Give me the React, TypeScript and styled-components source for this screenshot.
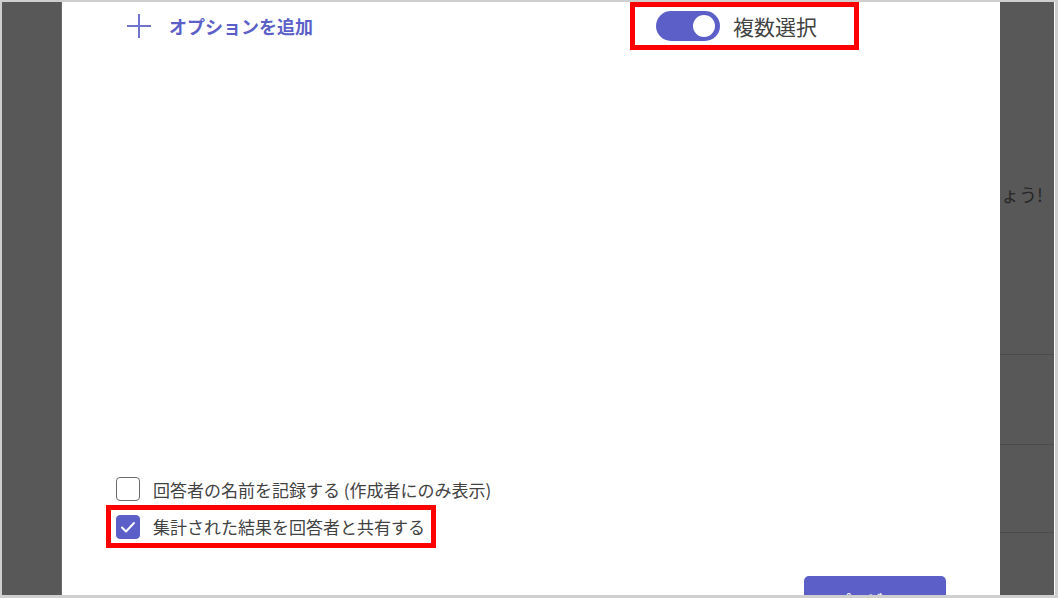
import React from "react";
import styled, { createGlobalStyle } from "styled-components";

const Global = createGlobalStyle`
  html, body { margin: 0; padding: 0; background: #ffffff; }
  body { font-family: "Noto Sans CJK JP", "Noto Sans", sans-serif; }
  * { box-sizing: border-box; }
`;

const Frame = styled.div`
  width: 1058px;
  height: 598px;
  border-style: solid;
  border-color: #cfcfcf;
  border-width: 2px 3px 3px 2px;
  display: flex;
  overflow: hidden;
  background: #ffffff;
`;

const Shade = styled.div<{ $w: number }>`
  width: ${(p) => p.$w}px;
  flex: none;
  background: #585858;
  display: flex;
  flex-direction: column;
  overflow: hidden;
`;

const BgRow = styled.div<{ $h: number; $line?: boolean }>`
  height: ${(p) => p.$h}px;
  flex: none;
  border-bottom: ${(p) => (p.$line ? "1px solid #4b4b4b" : "none")};
  display: flex;
  align-items: flex-end;
`;

const BgText = styled.span`
  font-size: 18px;
  color: #262626;
  white-space: nowrap;
  line-height: 24px;
  padding-left: 1px;
  margin-bottom: 1px;
`;

const Modal = styled.div`
  width: 939px;
  flex: none;
  background: #ffffff;
  display: flex;
  flex-direction: column;
  overflow: hidden;
  border-left: 1px solid #6a6a6a;
  & > * { flex: none; }
`;

const TopRow = styled.div`
  height: 48px;
  display: flex;
  align-items: center;
  justify-content: space-between;
  padding: 0 141px 0 64px;
`;

const AddOption = styled.button`
  display: flex;
  align-items: center;
  gap: 17px;
  border: none;
  background: none;
  padding: 0;
  font-family: inherit;
  font-size: 18px;
  font-weight: 600;
  color: #5b5fc7;
`;

const Highlight = styled.div<{ $pad: string }>`
  border: 5px solid #ff0000;
  padding: ${(p) => p.$pad};
  display: flex;
  align-items: center;
  flex: none;
`;

const ToggleBox = styled(Highlight)`
  align-self: stretch;
  width: 229px;
  gap: 13px;
`;

const Track = styled.span`
  width: 64px;
  height: 30px;
  border-radius: 15px;
  background: #5b5fc7;
  position: relative;
  flex: none;
`;

const Knob = styled.span`
  position: absolute;
  right: 5px;
  top: 4px;
  width: 22px;
  height: 22px;
  border-radius: 50%;
  background: #ffffff;
`;

const ToggleLabel = styled.span`
  font-size: 21px;
  color: #424242;
  line-height: 28px;
  white-space: nowrap;
`;

const Spacer = styled.div`
  height: 427px;
`;

const CheckRow = styled.label`
  display: flex;
  align-items: center;
  gap: 13px;
  height: 24px;
  font-size: 17px;
  color: #424242;
  white-space: nowrap;
  flex: none;
`;

const PlainRow = styled(CheckRow)`
  margin-left: 54px;
`;

const CheckWrap = styled(Highlight)`
  margin-left: 44px;
  margin-top: 4px;
  width: 330px;
  height: 43px;
`;

const Box = styled.span<{ $checked?: boolean }>`
  width: 24px;
  height: 24px;
  flex: none;
  border-radius: 4px;
  border: 1.5px solid ${(p) => (p.$checked ? "#5b5fc7" : "#6b6b6b")};
  background: ${(p) => (p.$checked ? "#5b5fc7" : "#ffffff")};
  display: flex;
  align-items: center;
  justify-content: center;
`;

const Footer = styled.div`
  margin-top: 28px;
  display: flex;
  justify-content: flex-end;
  padding-right: 54px;
`;

const Primary = styled.button`
  width: 142px;
  height: 40px;
  border: none;
  border-radius: 5px;
  background: #5b5fc7;
  color: #ffffff;
  font-family: inherit;
  font-size: 16px;
  font-weight: 700;
  padding-top: 9px;
`;

export default function App() {
  return (
    <>
      <Global />
      <Frame>
        <Shade $w={59} />
        <Modal>
          <TopRow>
            <AddOption>
              <svg width="26" height="26" viewBox="0 0 26 26">
                <path d="M13 1v24M1 13h24" stroke="#7174cf" strokeWidth="2" fill="none" />
              </svg>
              オプションを追加
            </AddOption>
            <ToggleBox $pad="0 0 0 21px">
              <Track>
                <Knob />
              </Track>
              <ToggleLabel>複数選択</ToggleLabel>
            </ToggleBox>
          </TopRow>
          <Spacer />
          <PlainRow>
            <Box />
            回答者の名前を記録する (作成者にのみ表示)
          </PlainRow>
          <CheckWrap $pad="0 0 0 5px">
            <CheckRow>
              <Box $checked>
                <svg width="18" height="18" viewBox="0 0 18 18">
                  <path d="M3 9.5l4 4 8-8.5" stroke="#ffffff" strokeWidth="2" fill="none" strokeLinecap="round" strokeLinejoin="round" />
                </svg>
              </Box>
              集計された結果を回答者と共有する
            </CheckRow>
          </CheckWrap>
          <Footer>
            <Primary>プレビュー</Primary>
          </Footer>
        </Modal>
        <Shade $w={54}>
          <BgRow $h={205}>
            <BgText>ょう!</BgText>
          </BgRow>
          <BgRow $h={148} $line />
          <BgRow $h={90} $line />
          <BgRow $h={88} $line />
        </Shade>
      </Frame>
    </>
  );
}
